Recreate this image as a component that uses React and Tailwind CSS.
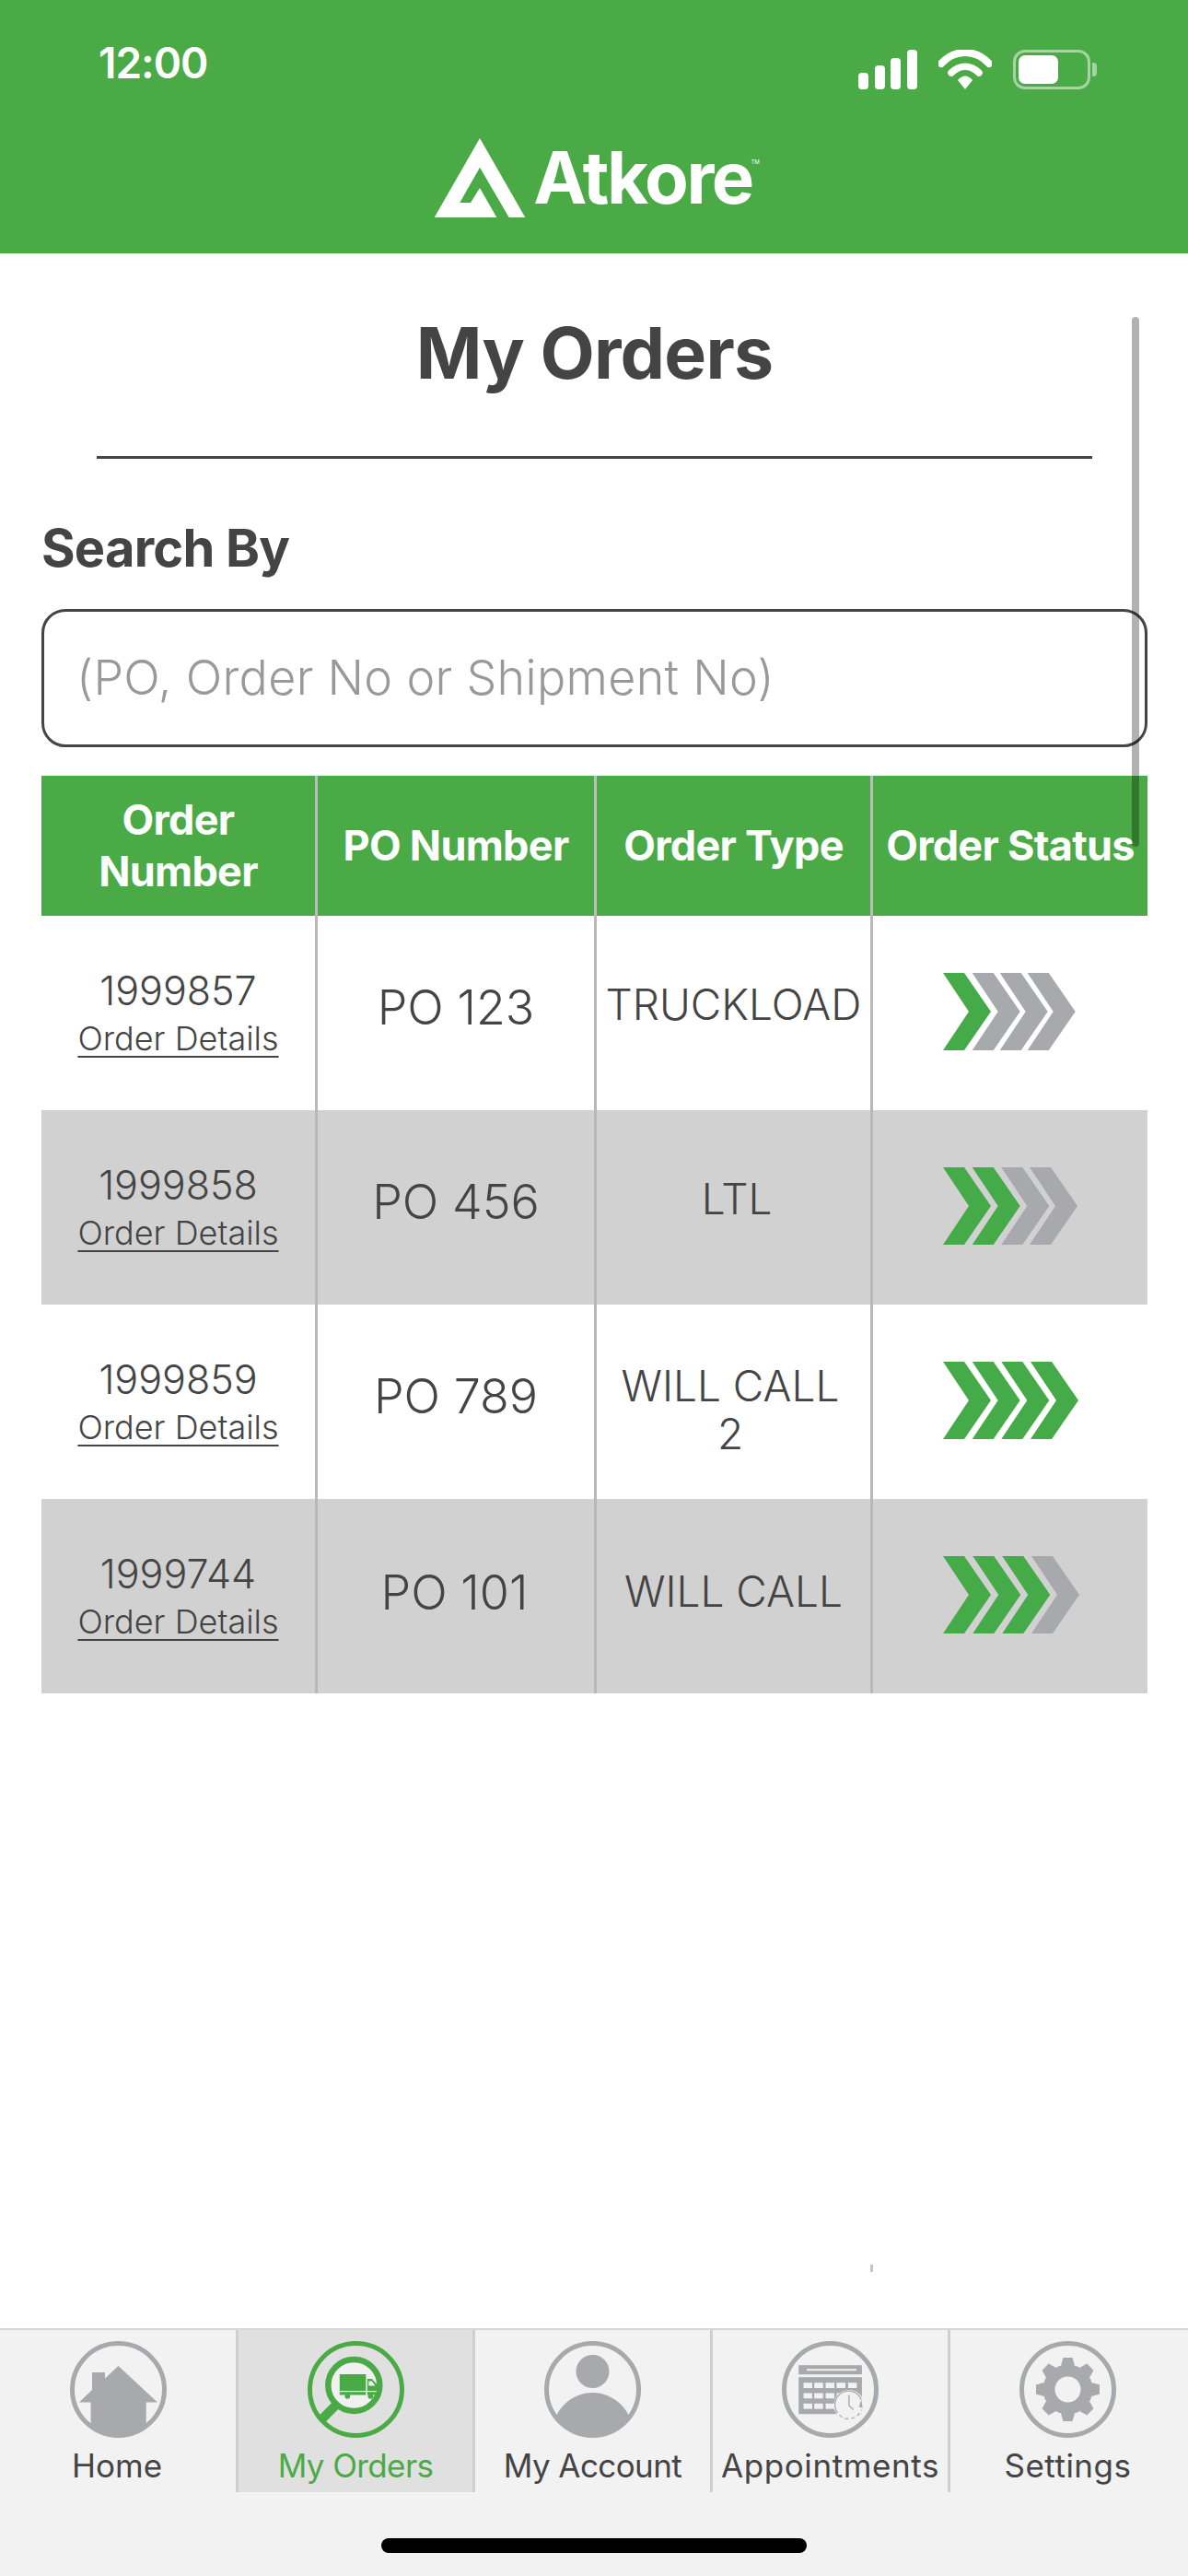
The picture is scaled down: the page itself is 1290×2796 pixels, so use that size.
const GREEN = '#4aaa46';
const CHEV = '#45ab48';
const GREY = '#a7a9ac';

function Chevrons({ greens, offsets }) {
  return (
    <svg width="160" height="90" viewBox="0 0 160 90" className="block">
      {offsets.map((o, i) => (
        <polygon
          key={i}
          points={`${o},3 ${o + 23},3 ${o + 52},45 ${o + 23},87 ${o},87 ${o + 28},45`}
          fill={i < greens ? CHEV : GREY}
        />
      ))}
    </svg>
  );
}

const rows = [
  { no: '1999857', po: 'PO 123', type: ['TRUCKLOAD'], typeClass: 'pb-[19px]', poClass: 'pb-[12px]', greens: 1, offsets: [0, 31.7, 61.7, 91.7], alt: false },
  { no: '1999858', po: 'PO 456', type: ['LTL'], typeClass: 'pb-[19px] pl-[7px]', poClass: 'pb-[12px]', greens: 2, offsets: [0, 31.7, 63.3, 94], alt: true },
  { no: '1999859', po: 'PO 789', type: ['WILL CALL', '2'], typeClass: 'pt-[16px] pr-[7px]', poClass: 'pb-[12px]', greens: 4, offsets: [0, 31.7, 63.3, 95], alt: false },
  { no: '1999744', po: 'PO 101', type: ['WILL CALL'], typeClass: 'pb-[12px]', poClass: 'pb-[8px] pr-[3px]', greens: 3, offsets: [0, 32.3, 64.3, 96], alt: true },
];

function StatusBar() {
  return (
    <div className="flex items-start justify-between pt-[43px] pl-[107px] pr-[99px] h-[107px]">
      <span className="text-[46px] leading-[50px] font-semibold text-white tracking-[-1px]">12:00</span>
      <div className="flex items-start gap-[23px] pt-[11px]">
        <svg width="64" height="43" viewBox="0 0 64 43" className="block">
          <rect x="0" y="25" width="11" height="18" rx="4" fill="#fff" />
          <rect x="18" y="17" width="11" height="26" rx="4" fill="#fff" />
          <rect x="35" y="9" width="11" height="34" rx="4" fill="#fff" />
          <rect x="53" y="0" width="11" height="43" rx="4" fill="#fff" />
        </svg>
        <svg width="58" height="43" viewBox="0 0 58 43" className="block">
          <path d="M3 15 C18 -1 40 -1 55 15" stroke="#fff" strokeWidth="8" fill="none" strokeLinecap="round" />
          <path d="M14 25 C23 16 35 16 44 25" stroke="#fff" strokeWidth="7.5" fill="none" strokeLinecap="round" />
          <path d="M21 33 C26 27 32 27 37 33 L29 43 Z" fill="#fff" />
        </svg>
        <div className="flex items-center">
          <div className="w-[84px] h-[43px] rounded-[13px] border-[3px] border-white/50 p-[3px]">
            <div className="w-[43px] h-full rounded-[7px] bg-white" />
          </div>
          <div className="w-[5px] h-[15px] rounded-r-[4px] bg-white/50 ml-[2px]" />
        </div>
      </div>
    </div>
  );
}

function Logo() {
  return (
    <div className="flex items-start justify-center pr-[4px] h-[168px]">
      <svg width="120" height="105" viewBox="0 0 120 105" className="block mt-[33px] -ml-[8px] shrink-0">
        <path d="M60 10 L109.3 96 H91.7 L60 41.7 L38.3 80 H50 L60 64 L78.3 96 H10.7 Z" fill="#fff" />
      </svg>
      <div className="relative mt-[41px] -ml-[2px]">
        <span className="block text-[78px] leading-[90px] font-bold text-white tracking-[-2.5px]">Atkore</span>
        <span className="absolute right-[-8px] top-[24px] text-[6px] leading-[8px] text-white">TM</span>
      </div>
    </div>
  );
}

function TabIcon({ children, viewBox = '0 0 105 105' }) {
  return (
    <svg width="105" height="105" viewBox={viewBox} className="block">
      {children}
    </svg>
  );
}

function Ring({ cx = 52.5, cy = 52.5, r = 50, color = GREY }) {
  return <circle cx={cx} cy={cy} r={r} fill="none" stroke={color} strokeWidth="5" />;
}

function HomeIcon() {
  return (
    <TabIcon>
      <defs>
        <clipPath id="home-clip"><circle cx="52.5" cy="52.5" r="52" /></clipPath>
      </defs>
      <g clipPath="url(#home-clip)" fill={GREY}>
        <path d="M52.5 27 L95 66.5 H82.7 V105 H22.6 V66.5 H10 L24 53 V34 H38 V40.5 Z" />
      </g>
      <Ring />
    </TabIcon>
  );
}

function OrdersIcon() {
  return (
    <TabIcon viewBox="14.2 11.5 105 105">
      <circle cx="66.7" cy="64" r="50" fill="none" stroke={GREEN} strokeWidth="5" />
      <path d="M46 80 L28 98" stroke={GREEN} strokeWidth="10" />
      <circle cx="64.5" cy="59.5" r="28" fill="#f1f1f1" stroke={GREEN} strokeWidth="6.5" />
      <rect x="49" y="47.5" width="28.5" height="22.5" fill={GREEN} />
      <path d="M79 52.5 H84 L90.7 60 V70 H79 Z" fill={GREEN} />
      <path d="M80.5 55 H84 L87.5 60 H80.5 Z" fill="#f1f1f1" />
      <rect x="49" y="65.5" width="40" height="1.2" fill="#f1f1f1" />
      <circle cx="57.5" cy="71.5" r="2.8" fill={GREEN} />
      <circle cx="82.5" cy="71.5" r="2.8" fill={GREEN} />
    </TabIcon>
  );
}

function AccountIcon() {
  return (
    <TabIcon>
      <defs>
        <clipPath id="acc-clip"><circle cx="52.5" cy="52.5" r="52" /></clipPath>
      </defs>
      <g clipPath="url(#acc-clip)" fill={GREY}>
        <circle cx="52.5" cy="33" r="18" />
        <ellipse cx="52.5" cy="101" rx="44" ry="45" />
      </g>
      <Ring />
    </TabIcon>
  );
}

function AppointmentsIcon() {
  const xs = [33.3, 45, 57.3, 69.3, 81.7];
  const ys = [56.7, 68, 79.3];
  return (
    <TabIcon viewBox="9.8 11.5 105 105">
      <circle cx="62.3" cy="64" r="50" fill="none" stroke={GREY} strokeWidth="5" />
      <rect x="28" y="37.7" width="68.7" height="10" fill={GREY} />
      <rect x="36.7" y="41.7" width="54" height="2" fill="#f2f2f2" />
      <rect x="28" y="50.7" width="68.7" height="40" fill={GREY} />
      {ys.map((y) =>
        xs.map((x) => <rect key={`${x}-${y}`} x={x} y={y} width="9.5" height="5.8" fill="#f2f2f2" />)
      )}
      <circle cx="82.7" cy="81" r="16.5" fill="#f2f2f2" />
      <path d="M68.5 86 A14.5 14.5 0 0 1 96 75" fill="none" stroke={GREY} strokeWidth="1.3" />
      <path d="M68.5 86 A14.5 14.5 0 0 0 96 86" fill="none" stroke={GREY} strokeWidth="1.3" strokeDasharray="4 3" />
      <path d="M96 75 L97.5 84 L93.5 83 Z" fill={GREY} />
      <path d="M82.7 70 V81.5 L87.5 86" fill="none" stroke={GREY} strokeWidth="1.4" />
    </TabIcon>
  );
}

function SettingsIcon() {
  return (
    <TabIcon>
      <Ring />
      <g transform="translate(52.5 52.5)" fill={GREY}>
        <circle r="27" />
        {[0, 45, 90, 135, 180, 225, 270, 315].map((a) => (
          <path key={a} d="M-7.5 -26 L-5 -34.5 H5 L7.5 -26 Z" transform={`rotate(${a})`} />
        ))}
        <circle r="14" fill="#f2f2f2" />
      </g>
    </TabIcon>
  );
}

const tabs = [
  { label: 'Home', icon: <HomeIcon />, w: 'w-[256px]', text: 'pr-[2px]' },
  { label: 'My Orders', icon: <OrdersIcon />, w: 'w-[260px]', active: true, text: 'tracking-[-0.6px]' },
  { label: 'My Account', icon: <AccountIcon />, w: 'w-[258px]', text: 'tracking-[-0.6px]' },
  { label: 'Appointments', icon: <AppointmentsIcon />, w: 'w-[258px]', text: 'tracking-[0.6px]' },
  { label: 'Settings', icon: <SettingsIcon />, w: 'w-[258px]', text: 'tracking-[0.5px]' },
];

export default function App() {
  return (
    <div className="flex flex-col w-[1290px] h-[2796px] bg-white text-[#444444] font-['Inter',sans-serif] overflow-hidden">
      <header className="h-[275px] shrink-0 bg-[#4aaa46]">
        <StatusBar />
        <Logo />
      </header>

      <main className="relative flex-1 pl-[45px] pr-[44px]">
        <h1 className="mt-[60px] text-center text-[77px] leading-[96px] font-bold tracking-[-0.8px]">My Orders</h1>
        <div className="mt-[64px] mx-[60px] h-[3px] bg-[#444444]" />
        <h2 className="mt-[62px] text-[56px] leading-[70px] font-bold tracking-[-0.8px]">Search By</h2>
        <input
          className="mt-[31px] block w-full h-[150px] rounded-[26px] border-[3px] border-[#444444] bg-transparent pl-[35px] pb-[2px] text-[52px] tracking-[0.3px] font-light outline-none placeholder:text-[#999999]"
          placeholder="(PO, Order No or Shipment No)"
        />
        <div className="mt-[31px]">
          <div className="grid grid-cols-[300px_303px_300px_298px] h-[152px] bg-[#4aaa46] text-white text-[45px] leading-[56px] font-bold tracking-[-0.7px] text-center">
            <div className="flex items-center justify-center border-r-[3px] border-[#bdbdbd]">Order<br />Number</div>
            <div className="flex items-center justify-center border-r-[3px] border-[#bdbdbd]">PO Number</div>
            <div className="flex items-center justify-center border-r-[3px] border-[#bdbdbd]">Order Type</div>
            <div className="flex items-center justify-center whitespace-nowrap">Order Status</div>
          </div>
          {rows.map((r) => (
            <div key={r.no} className={`grid grid-cols-[300px_303px_300px_298px] h-[211px] font-light text-center ${r.alt ? 'bg-[#d1d1d1]' : 'bg-white'}`}>
              <div className="flex flex-col items-center justify-center border-r-[3px] border-[#b8b8b8] pt-[3px]">
                <div className="text-[43px] leading-[52px]">{r.no}</div>
                <a className="text-[36px] leading-[52px] underline underline-offset-[6px] decoration-[2px]">Order Details</a>
              </div>
              <div className={`flex items-center justify-center border-r-[3px] border-[#b8b8b8] text-[52px] ${r.poClass}`}>{r.po}</div>
              <div className={`flex flex-col items-center justify-center border-r-[3px] border-[#b8b8b8] text-[46px] leading-[52px] ${r.typeClass}`}>
                {r.type.map((t) => (<div key={t}>{t}</div>))}
              </div>
              <div className="flex items-center pl-[76px] pb-[3px]">
                <Chevrons greens={r.greens} offsets={r.offsets} />
              </div>
            </div>
          ))}
        </div>
        <div className="absolute right-[53px] top-[69px] w-[8px] h-[575px] rounded-full bg-black/30" />
        <div className="absolute left-[945px] bottom-[61px] w-[3px] h-[8px] bg-[#c4c4c4]" />
      </main>

      <nav className="h-[269px] shrink-0 bg-[#f2f2f2] border-t-[2px] border-[#d6d6d6]">
        <div className="flex h-[176px]">
          {tabs.map((t) => (
            <div
              key={t.label}
              className={`${t.w} flex flex-col items-center pt-[12px] ${t.label === 'Home' ? '' : 'border-l-[3px] border-[#cfcfcf]'} ${t.active ? 'bg-[#e0e0e0] border-r-[3px] -mr-[3px] text-[#4aaa46]' : 'text-[#444444]'}`}
            >
              {t.icon}
              <span className={`mt-[5px] text-[35px] leading-[50px] font-normal whitespace-nowrap ${t.text}`}>{t.label}</span>
            </div>
          ))}
        </div>
        <div className="mx-auto mt-[50px] h-[16px] w-[462px] rounded-full bg-black" />
      </nav>
    </div>
  );
}
